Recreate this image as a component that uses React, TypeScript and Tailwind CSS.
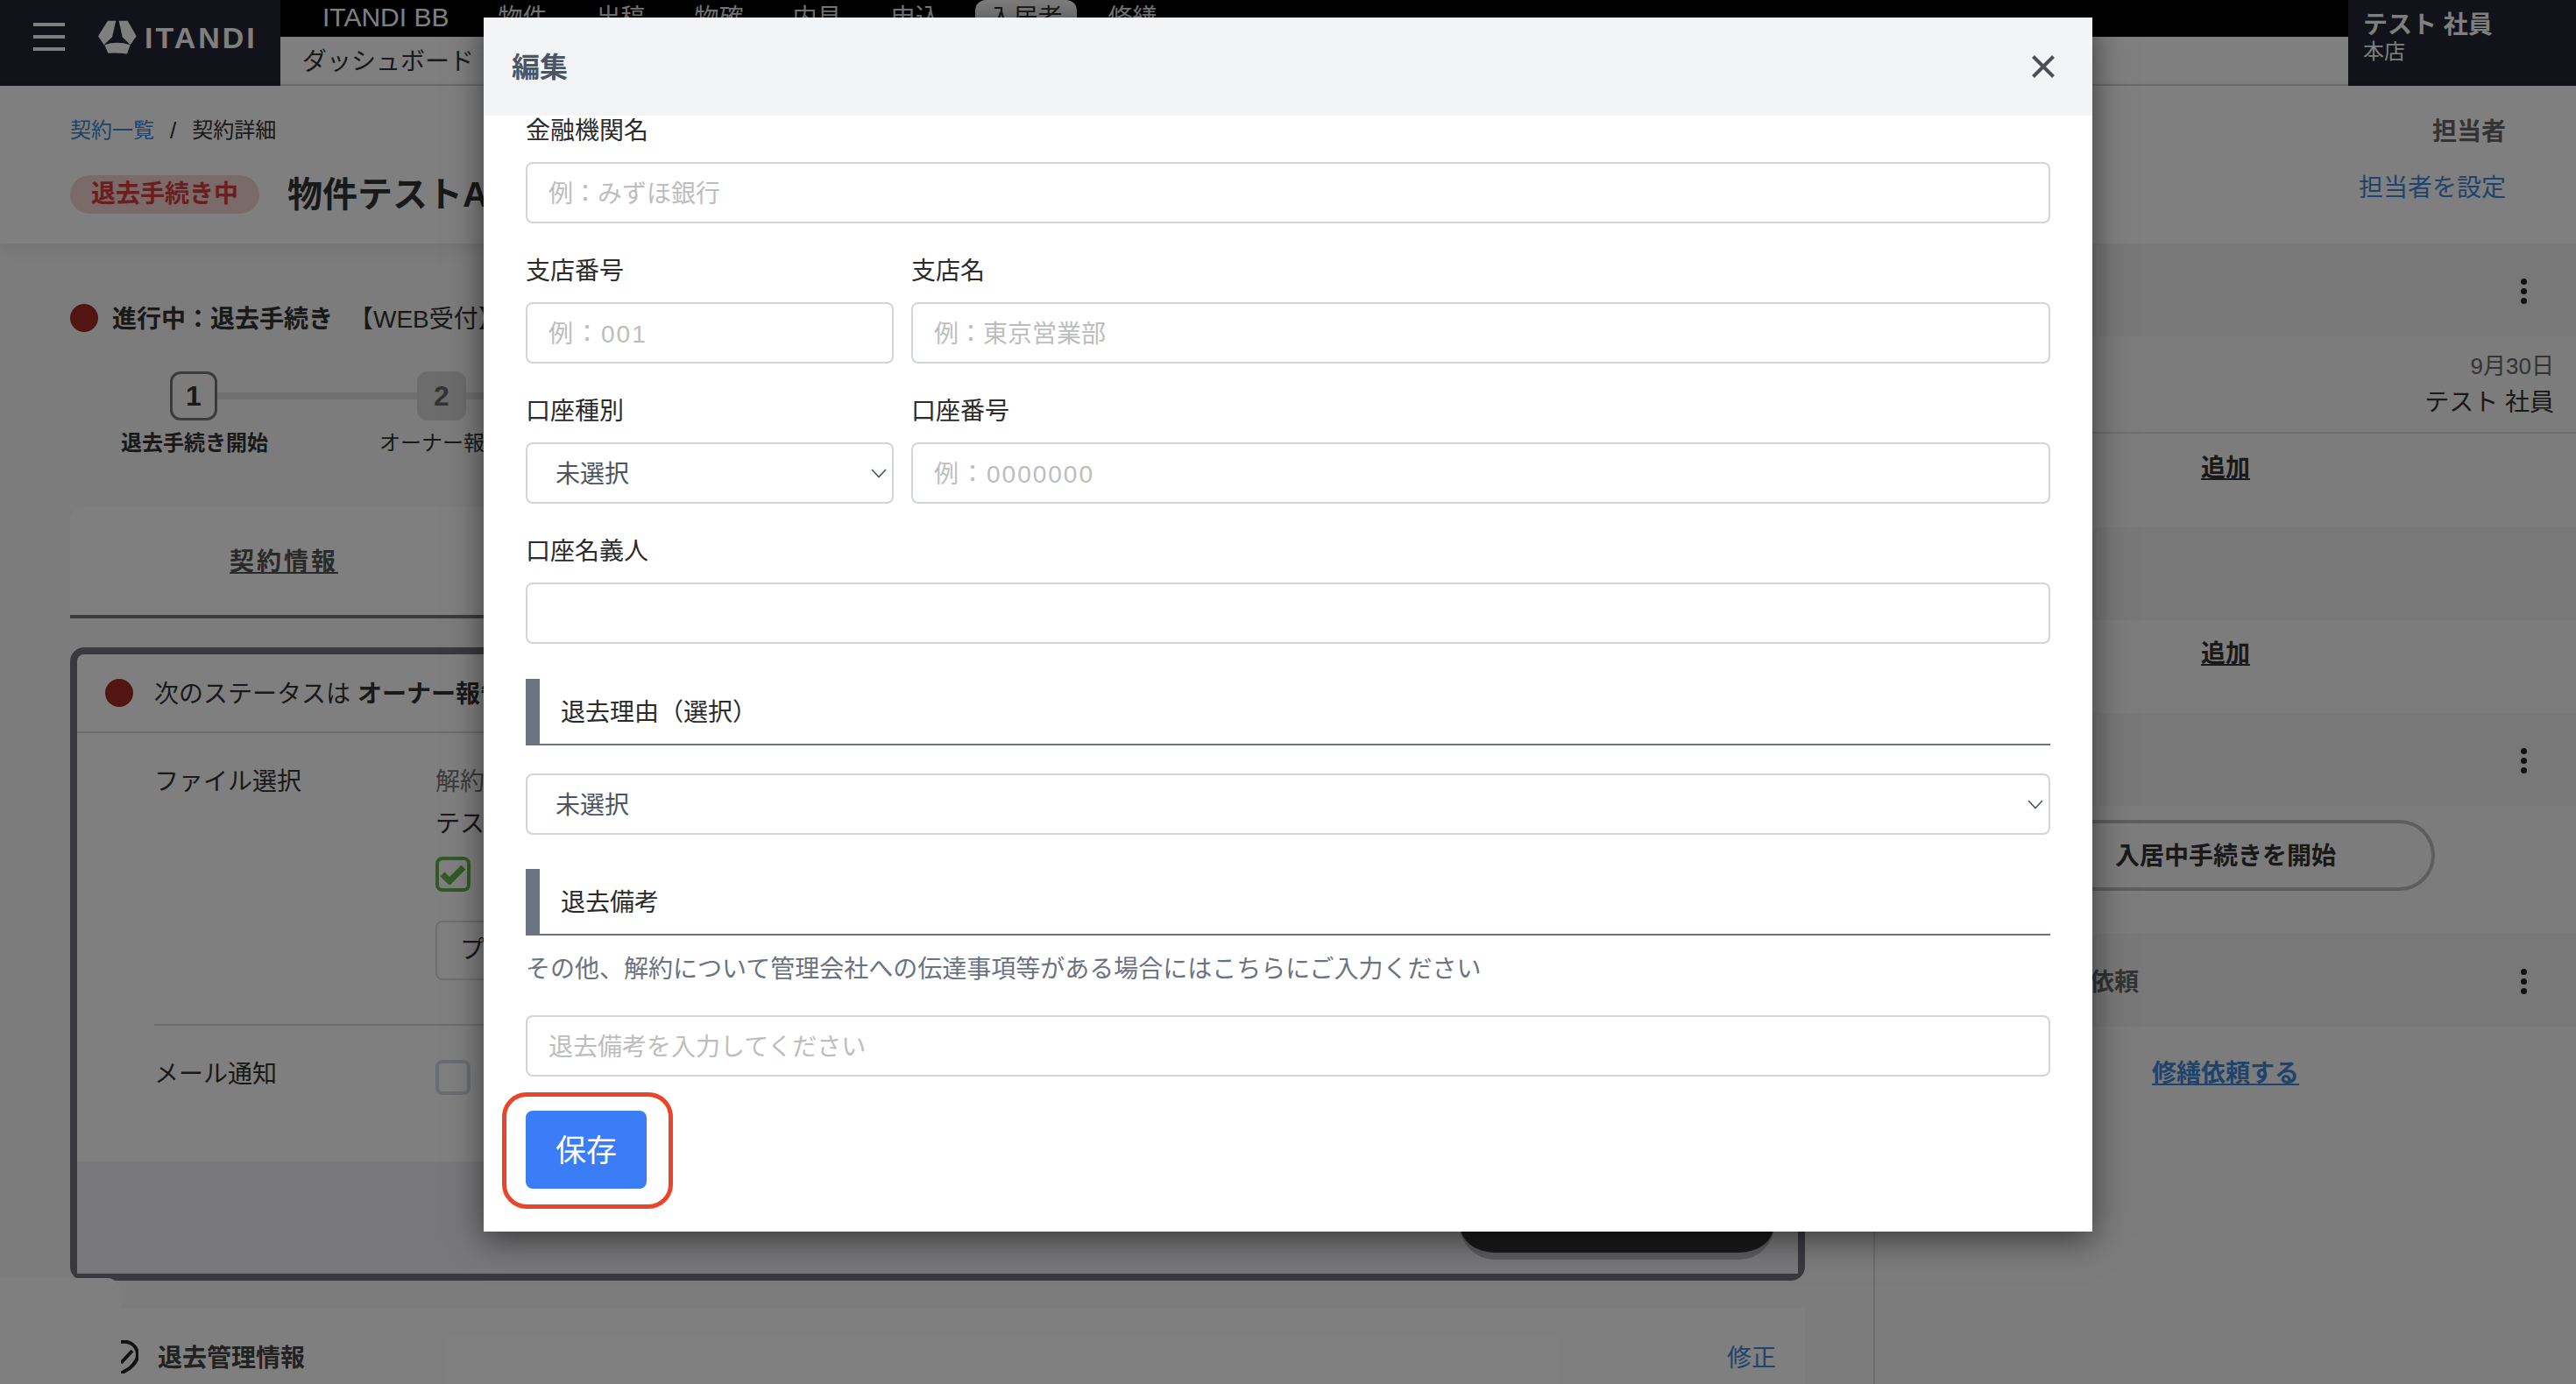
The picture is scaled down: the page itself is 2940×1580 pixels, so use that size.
import React from 'react';

const Dots: React.FC = () => (
  <div className="flex flex-col gap-[4px] mt-[3px]">
    <span className="w-[7px] h-[7px] rounded-full bg-[#222]" />
    <span className="w-[7px] h-[7px] rounded-full bg-[#222]" />
    <span className="w-[7px] h-[7px] rounded-full bg-[#222]" />
  </div>
);

const Band: React.FC<{ children?: React.ReactNode }> = ({ children }) => (
  <div className="h-[106px] bg-[#f0f0f0] flex items-center justify-end pr-[56px] relative">{children}</div>
);

const TextInput: React.FC<{ placeholder?: string; className?: string }> = ({ placeholder, className }) => (
  <input
    placeholder={placeholder}
    className={`w-full h-[70px] border-2 border-[#d1d5db] rounded-[8px] pl-[24px] pt-[3px] text-[28px] text-[#333] placeholder:text-[#bdbdbd] outline-none bg-white ${className}`}
  />
);

const SelectBox: React.FC = () => (
  <div className="relative w-full h-[70px]">
    <select className="appearance-none w-full h-full border-2 border-[#d1d5db] rounded-[8px] pl-[32px] pt-[3px] text-[28px] text-[#4b5563] bg-white outline-none">
      <option>未選択</option>
    </select>
    <svg className="absolute right-[8px] top-[30px]" width="18" height="11" viewBox="0 0 18 11" fill="none">
      <polyline points="1,1 9,9.5 17,1" stroke="#4b5563" strokeWidth="1.6" />
    </svg>
  </div>
);

const Field: React.FC<{ label: string; className?: string; children: React.ReactNode }> = ({ label, className, children }) => (
  <div className={className}>
    <div className="h-[32px] leading-[36px] text-[28px] text-[#2b2b2b] mb-[21px]">{label}</div>
    {children}
  </div>
);

const SectionTitle: React.FC<{ className?: string; children: React.ReactNode }> = ({ className, children }) => (
  <div className={`h-[76px] border-l-[16px] border-b-2 border-[#6b7280] flex items-center pl-[24px] pt-[4px] text-[28px] text-[#2b2b2b] ${className}`}>
    {children}
  </div>
);

const Header: React.FC = () => (
  <header className="flex h-[98px]">
    <div className="w-[320px] bg-[#242434] flex items-start pt-[23px] pl-[38px]">
      <div className="w-[36px] mt-[3px] flex flex-col gap-[10px]">
        <span className="h-[4px] bg-white" />
        <span className="h-[4px] bg-white" />
        <span className="h-[4px] bg-white" />
      </div>
      <svg className="ml-[38px]" width="44" height="39" viewBox="0 0 132 116" fill="white">
        <path d="M33 2 L61 2 L48 57 L20 84 L0 54 Z" />
        <path d="M71 2 L101 2 L131 54 L110 84 L83 57 Z" />
        <path d="M22 84 Q63 70 110 84 L99 115 Q65 110 34 113 Z" />
      </svg>
      <span className="ml-[9px] mt-[1px] text-[34px] leading-[38px] font-bold tracking-[3px] text-white">ITANDI</span>
    </div>
    <div className="flex-1 flex flex-col">
      <div className="h-[42px] bg-black flex items-center pl-[48px] gap-[56px] text-[28px] text-white">
        <span className="text-[30px] -mt-[4px]">ITANDI BB</span>
        <span>物件</span>
        <span>出稿</span>
        <span>物確</span>
        <span>内見</span>
        <span>申込</span>
        <span className="bg-white text-[#333] rounded-t-[12px] h-full flex items-center px-[16px] -ml-[16px] mr-[-20px]">入居者</span>
        <span>修繕</span>
      </div>
      <div className="flex-1 bg-white border-b-2 border-[#d8d8d8] flex items-center pl-[25px] pt-[4px] text-[28px] text-[#333]">
        ダッシュボード
      </div>
    </div>
    <div className="w-[260px] bg-[#242434] pl-[17px] pt-[10px] text-white">
      <div className="text-[28px] leading-[38px] font-bold">テスト 社員</div>
      <div className="text-[24px] leading-[28px] -mt-[3px]">本店</div>
    </div>
  </header>
);

const TitleStrip: React.FC = () => (
  <div className="relative h-[180px] bg-white shadow-[0_6px_16px_rgba(0,0,0,0.08)] flex justify-between pl-[80px] pr-[80px]">
    <div>
      <div className="mt-[34px] h-[32px] leading-[34px] text-[24px] text-[#333] flex">
        <span className="text-[#3d86d8]">契約一覧</span>
        <span className="mx-[18px] text-[26px]">/</span>
        <span>契約詳細</span>
      </div>
      <div className="mt-[36px] flex items-center">
        <span className="h-[44px] w-[216px] rounded-full bg-[#f4d4d4] text-[#d83c3c] font-bold text-[28px] flex items-center justify-center">退去手続き中</span>
        <span className="ml-[32px] h-[44px] leading-[44px] text-[40px] font-bold text-[#333]">物件テストA</span>
      </div>
    </div>
    <div className="text-right text-[28px]">
      <div className="mt-[35px] h-[36px] leading-[36px] font-bold text-[#666]">担当者</div>
      <div className="mt-[26px] h-[36px] leading-[40px] text-[#3d86d8]">担当者を設定</div>
    </div>
  </div>
);

const MainColumn: React.FC = () => (
  <main className="w-[2138px] pl-[80px] text-[#333]">
    <div className="mt-[69px] flex items-center h-[32px] text-[28px]">
      <span className="w-[32px] h-[32px] rounded-full bg-[#a42a24]" />
      <span className="ml-[16px] pt-[3px] font-bold">進行中：退去手続き</span>
      <span className="ml-[18px] pt-[3px]">【WEB受付】</span>
    </div>

    {/* Stepper */}
    <div className="mt-[45px] ml-[114px] flex items-center">
      <span className="w-[54px] h-[56px] rounded-[12px] border-[3px] border-[#77777c] flex items-center justify-center font-bold text-[32px]">1</span>
      <span className="w-[228px] h-[8px] bg-[#dedede]" />
      <span className="w-[56px] h-[56px] rounded-[12px] bg-[#d8d8d8] flex items-center justify-center font-bold text-[32px] text-[#666]">2</span>
      <span className="w-[200px] h-[8px] bg-[#dedede]" />
    </div>
    <div className="mt-[10px] ml-[58px] flex text-[24px] leading-[32px]">
      <span className="w-[295px] font-bold">退去手続き開始</span>
      <span className="whitespace-nowrap">オーナー報告</span>
    </div>

    {/* Tabs */}
    <div className="mt-[57px] w-[1980px] h-[127px] border-b-4 border-[#77777c]">
      <div className="w-[488px] h-full bg-white rounded-tl-[16px] flex items-center justify-center pt-[3px] text-[28px] font-bold underline tracking-[3px] text-[#555]">
        契約情報
      </div>
    </div>

    {/* Next status card */}
    <div className="mt-[33px] w-[1980px] h-[723px] border-8 border-[#74727c] rounded-[16px] bg-white flex flex-col">
      <div className="h-[90px] flex items-center pl-[32px] border-b-2 border-[#d8d8d8] text-[28px] shrink-0">
        <span className="w-[32px] h-[32px] rounded-full bg-[#a42a24]" />
        <span className="ml-[24px] pt-[3px]">次のステータスは</span>
        <span className="ml-[8px] pt-[3px] font-bold">オーナー報告</span>
      </div>
      <div className="ml-[88px] h-[334px] flex pt-[32px] border-b-2 border-[#d8d8d8] text-[28px] shrink-0">
        <div className="w-[321px] leading-[48px]">ファイル選択</div>
        <div>
          <div className="h-[44px] leading-[48px] text-[#777]">解約通知書</div>
          <div className="h-[44px] leading-[48px] mt-[4px]">テスト</div>
          <div className="mt-[17px] w-[40px] h-[40px] border-4 border-[#68b04c] rounded-[8px] flex items-center justify-center">
            <svg width="30" height="24" viewBox="0 0 30 24" fill="none">
              <polyline points="3,12 11,20 27,4" stroke="#68b04c" strokeWidth="7" />
            </svg>
          </div>
          <div className="mt-[33px] w-[200px] h-[68px] border-2 border-[#ddd] rounded-[8px] flex items-center pl-[26px]">プレビュー</div>
        </div>
      </div>
      <div className="ml-[88px] pt-[32px] flex text-[28px] shrink-0">
        <div className="w-[321px] leading-[48px]">メール通知</div>
        <div className="mt-[7px] w-[40px] h-[40px] border-4 border-[#d5dae3] rounded-[8px]" />
      </div>
      <div className="mt-auto h-[128px] bg-[#f0f0f4] flex items-end justify-end pr-[27px] pb-[16px]">
        <div className="w-[359px] h-[70px] rounded-b-[40px] bg-[#343438] border-b-8 border-[#b8b8b8] box-content" />
      </div>
    </div>

    {/* Management info */}
    <div className="mt-[32px] w-[1980px] h-[120px] bg-white flex items-start pt-[36px] pl-[42px] pr-[33px] text-[28px]">
      <svg width="36" height="38" viewBox="0 0 36 38" fill="none" stroke="#222" strokeWidth="4">
        <path d="M16 2 C28 0 35 8 35 17 C35 24 30 28 26 32 L16 38 M29 12 L16 26" />
      </svg>
      <span className="ml-[22px] font-bold leading-[42px] text-[#444]">退去管理情報</span>
      <span className="ml-auto leading-[42px] text-[#3d86d8]">修正</span>
    </div>
  </main>
);

const Sidebar: React.FC = () => (
  <aside className="flex-1 border-l-2 border-[#d8d8d8] text-[28px] text-[#333]">
    <Band>
      <Dots />
    </Band>
    <div className="h-[111px] border-b-2 border-[#d8d8d8] pr-[25px] pt-[16px] text-right">
      <div className="text-[26px] leading-[36px] text-[#666]">9月30日</div>
      <div className="mt-[4px] leading-[40px]">テスト 社員</div>
    </div>
    <div className="h-[107px] pt-[20px] text-center font-bold underline leading-[40px]">追加</div>
    <Band />
    <div className="h-[106px] pt-[19px] text-center font-bold underline leading-[40px]">追加</div>
    <Band>
      <Dots />
    </Band>
    <div className="h-[146px] pt-[16px] flex justify-center">
      <div className="w-[478px] h-[81px] rounded-full border-4 border-[#bcbcbc] flex items-center justify-center pt-[3px] font-bold">入居中手続きを開始</div>
    </div>
    <Band>
      <span className="absolute left-[189px] top-[36px] font-bold leading-[40px] text-[#666]">修繕依頼</span>
      <Dots />
    </Band>
    <div className="pt-[34px] text-center font-bold underline leading-[40px] text-[#3d86d8]">修繕依頼する</div>
  </aside>
);

const EditModal: React.FC = () => (
  <div className="absolute left-[552px] top-[20px] w-[1836px] h-[1386px] bg-white flex flex-col shadow-[0_8px_36px_rgba(0,0,0,0.55)]">
    <div className="h-[112px] bg-[#f3f4f6] flex items-center justify-between pl-[32px] pr-[43px] shrink-0">
      <span className="pt-[2px] text-[32px] font-bold text-[#4b5563]">編集</span>
      <svg width="26" height="26" viewBox="0 0 26 26" fill="none" stroke="#4f4f57" strokeWidth="4">
        <path d="M1.5 1.5 L24.5 24.5 M24.5 1.5 L1.5 24.5" />
      </svg>
    </div>
    <div className="flex-1 px-[48px] flex flex-col">
      <Field label="金融機関名">
        <TextInput placeholder="例：みずほ銀行" />
      </Field>
      <div className="mt-[37px] flex gap-[20px]">
        <Field label="支店番号" className="w-[420px] shrink-0">
          <TextInput placeholder="例：001" className="tracking-[2px]" />
        </Field>
        <Field label="支店名" className="flex-1">
          <TextInput placeholder="例：東京営業部" />
        </Field>
      </div>
      <div className="mt-[37px] flex gap-[20px]">
        <Field label="口座種別" className="w-[420px] shrink-0">
          <SelectBox />
        </Field>
        <Field label="口座番号" className="flex-1">
          <TextInput placeholder="例：0000000" className="tracking-[2px]" />
        </Field>
      </div>
      <Field label="口座名義人" className="mt-[37px]">
        <TextInput />
      </Field>

      <SectionTitle className="mt-[40px]">退去理由（選択）</SectionTitle>
      <div className="mt-[32px]">
        <SelectBox />
      </div>

      <SectionTitle className="mt-[39px]">退去備考</SectionTitle>
      <p className="mt-[19px] mb-[-2px] leading-[40px] text-[28px] text-[#6b7280]">
        その他、解約について管理会社への伝達事項等がある場合にはこちらにご入力ください
      </p>
      <div className="mt-[34px]">
        <TextInput placeholder="退去備考を入力してください" />
      </div>

      <div className="relative mt-[39px] w-[138px] h-[89px]">
        <button className="w-full h-full rounded-[8px] pt-[3px] bg-[#3b7df7] text-white text-[35px]">保存</button>
        {/* annotation */}
        <span className="absolute -left-[27px] -right-[30px] -top-[21px] -bottom-[23px] border-[5px] border-[#e9452b] rounded-[28px]" />
      </div>
    </div>
  </div>
);

const App: React.FC = () => (
  <div className="relative w-[2940px] h-[1580px] overflow-hidden bg-[#f8f8f8] font-[family-name:'Liberation_Sans','Noto_Sans_CJK_JP',sans-serif]">
    <Header />
    <TitleStrip />
    <div className="flex">
      <MainColumn />
      <Sidebar />
    </div>
    {/* floating patch over the bottom left corner */}
    <div className="absolute left-0 top-[1459px] w-[138px] h-[121px] bg-white rounded-tr-[16px]" />
    <div className="absolute inset-0 bg-black/50" />
    <EditModal />
  </div>
);

export default App;
